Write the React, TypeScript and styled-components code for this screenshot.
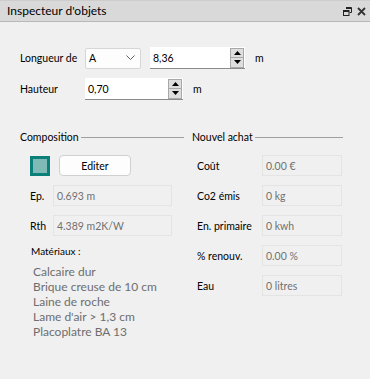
import React from "react";
import styled, { createGlobalStyle } from "styled-components";

const Global = createGlobalStyle`
  html, body { margin: 0; padding: 0; background: #f0f0f0; }
  body {
    font-family: Lato, "Noto Sans", sans-serif;
    font-size: 10.5px;
    color: #000;
  }
`;

const Panel = styled.div`
  width: 370px;
  height: 379px;
  background: #f0f0f0;
  display: flex;
  flex-direction: column;
  overflow: hidden;
  white-space: nowrap;
`;

const TitleBar = styled.div`
  height: 20px;
  background: #d9d9d9;
  border-top: 1px solid #cdcdcd;
  border-bottom: 1px solid #b8b8b8;
  display: flex;
  align-items: center;
  padding: 0 4px 0 7px;
  font-size: 12px;
`;

const Title = styled.span`
  flex: 1;
  line-height: 20px;
`;

const TitleIcons = styled.div`
  display: flex;
  align-items: center;
  gap: 5px;
`;

const Body = styled.div`
  padding: 25px 0 0 20px;
  display: flex;
  flex-direction: column;
`;

const FormRows = styled.div`
  display: flex;
  flex-direction: column;
  gap: 9px;
`;

const FormRow = styled.div`
  display: flex;
  align-items: center;
  height: 22px;
`;

const FormLabel = styled.span`
  width: 65px;
  flex: none;
`;

const Combo = styled.div`
  width: 46px;
  height: 19px;
  border: 1px solid #d6d6d6;
  border-radius: 2px;
  background: #fdfdfd;
  display: flex;
  align-items: center;
  justify-content: space-between;
  padding: 0 5px 0 3px;
  box-sizing: content-box;
  margin-right: 9px;
`;

const SpinBox = styled.div<{ $w: number }>`
  width: ${(p) => p.$w}px;
  height: 22px;
  box-sizing: border-box;
  background: #fff;
  border-bottom: 1px solid #8c8c8c;
  display: flex;
  align-items: center;
  padding: 0 1px 0 3px;
`;

const SpinValue = styled.span`
  flex: 1;
`;

const SpinButtons = styled.div`
  display: flex;
  flex-direction: column;
  width: 14px;
  height: 20px;
  border: 1px solid #a8a8a8;
  box-sizing: border-box;
  background: #dedede;
`;

const SpinHalf = styled.div<{ $top?: boolean }>`
  flex: 1;
  display: flex;
  align-items: center;
  justify-content: center;
  border-bottom: ${(p) => (p.$top ? "1px solid #a8a8a8" : "none")};
`;

const Unit = styled.span`
  margin-left: 10px;
`;

const Groups = styled.div`
  margin-top: 30px;
  display: grid;
  grid-template-columns: 164px 151px;
  column-gap: 8px;
`;

const Group = styled.div`
  display: flex;
  flex-direction: column;
`;

const GroupHeader = styled.div`
  display: flex;
  align-items: center;
  height: 14px;
  &::after {
    content: "";
    flex: 1;
    height: 1px;
    background: #a0a0a0;
    margin-left: 2px;
  }
`;

const GroupBody = styled.div<{ $indent: number }>`
  margin-top: 11px;
  padding-left: ${(p) => p.$indent}px;
  display: flex;
  flex-direction: column;
  gap: 9px;
`;

const Row = styled.div`
  display: flex;
  align-items: center;
  height: 21px;
`;

const Swatch = styled.div`
  width: 20px;
  height: 20px;
  box-sizing: border-box;
  border: 3px solid #0b7f7a;
  background: #7fbab6;
  margin-right: 9px;
`;

const Button = styled.button`
  width: 72px;
  height: 21px;
  border: 1px solid #d0d0d0;
  border-radius: 4px;
  background: #fdfdfd;
  font-family: inherit;
  font-size: 10.5px;
  color: #000;
  padding: 0;
`;

const FieldLabel = styled.span<{ $w: number }>`
  width: ${(p) => p.$w}px;
  flex: none;
`;

const Field = styled.div<{ $w: number }>`
  width: ${(p) => p.$w}px;
  height: 21px;
  box-sizing: border-box;
  border: 1px solid #fbfbfb;
  outline: 1px solid #e4e4e4;
  outline-offset: -1px;
  display: flex;
  align-items: center;
  padding-left: 3px;
  color: #707070;
`;

const MatTitle = styled.div`
  margin-top: -1px;
  line-height: 14px;
  font-size: 10px;
  padding-left: 1px;
`;

const MatList = styled.ul`
  list-style: none;
  margin: -3px 0 0 0;
  padding: 0 0 0 3px;
  font-size: 12px;
  line-height: 15px;
  color: #6e6e6e;
`;

const Chevron = () => (
  <svg width="9" height="6" viewBox="0 0 9 6">
    <path d="M0.5 0.5 L4.5 4.5 L8.5 0.5" fill="none" stroke="#606060" strokeWidth="1" />
  </svg>
);

const Tri = ({ up }: { up?: boolean }) => (
  <svg width="7" height="4" viewBox="0 0 7 4">
    <path d={up ? "M0 4 L3.5 0 L7 4 Z" : "M0 0 L3.5 4 L7 0 Z"} fill="#000" />
  </svg>
);

const Spin = ({ value, w }: { value: string; w: number }) => (
  <SpinBox $w={w}>
    <SpinValue>{value}</SpinValue>
    <SpinButtons>
      <SpinHalf $top>
        <Tri up />
      </SpinHalf>
      <SpinHalf>
        <Tri />
      </SpinHalf>
    </SpinButtons>
  </SpinBox>
);

const FloatIcon = () => (
  <svg width="9" height="9" viewBox="0 0 9 9">
    <path d="M3 0.5 H8.5 V5.5 H6.5" fill="none" stroke="#222" strokeWidth="1" />
    <path d="M3 1 H8" stroke="#222" strokeWidth="2" />
    <rect x="0.5" y="3.5" width="5.5" height="5" fill="none" stroke="#222" strokeWidth="1" />
    <path d="M0.5 4 H6" stroke="#222" strokeWidth="2" />
  </svg>
);

const CloseIcon = () => (
  <svg width="9" height="9" viewBox="0 0 9 9">
    <path d="M1 1 L8 8 M8 1 L1 8" stroke="#333" strokeWidth="1.8" />
  </svg>
);

const materials = [
  "Calcaire dur",
  "Brique creuse de 10 cm",
  "Laine de roche",
  "Lame d'air > 1,3 cm",
  "Placoplatre BA 13",
];

const achats: [string, string][] = [
  ["Coût", "0.00 €"],
  ["Co2 émis", "0 kg"],
  ["En. primaire", "0 kwh"],
  ["% renouv.", "0.00 %"],
  ["Eau", "0 litres"],
];

export default function App() {
  return (
    <Panel>
      <Global />
      <TitleBar>
        <Title>Inspecteur d'objets</Title>
        <TitleIcons>
          <FloatIcon />
          <CloseIcon />
        </TitleIcons>
      </TitleBar>
      <Body>
        <FormRows>
          <FormRow>
            <FormLabel>Longueur de</FormLabel>
            <Combo>
              <span>A</span>
              <Chevron />
            </Combo>
            <Spin value="8,36" w={95} />
            <Unit>m</Unit>
          </FormRow>
          <FormRow>
            <FormLabel>Hauteur</FormLabel>
            <Spin value="0,70" w={98} />
            <Unit>m</Unit>
          </FormRow>
        </FormRows>
        <Groups>
          <Group>
            <GroupHeader>Composition</GroupHeader>
            <GroupBody $indent={10}>
              <Row>
                <Swatch />
                <Button>Editer</Button>
              </Row>
              <Row>
                <FieldLabel $w={23}>Ep.</FieldLabel>
                <Field $w={119}>0.693 m</Field>
              </Row>
              <Row>
                <FieldLabel $w={23}>Rth</FieldLabel>
                <Field $w={119}>4.389 m2K/W</Field>
              </Row>
              <MatTitle>Matériaux :</MatTitle>
              <MatList>
                {materials.map((m) => (
                  <li key={m}>{m}</li>
                ))}
              </MatList>
            </GroupBody>
          </Group>
          <Group>
            <GroupHeader>Nouvel achat</GroupHeader>
            <GroupBody $indent={5}>
              {achats.map(([l, v]) => (
                <Row key={l}>
                  <FieldLabel $w={65}>{l}</FieldLabel>
                  <Field $w={80}>{v}</Field>
                </Row>
              ))}
            </GroupBody>
          </Group>
        </Groups>
      </Body>
    </Panel>
  );
}
